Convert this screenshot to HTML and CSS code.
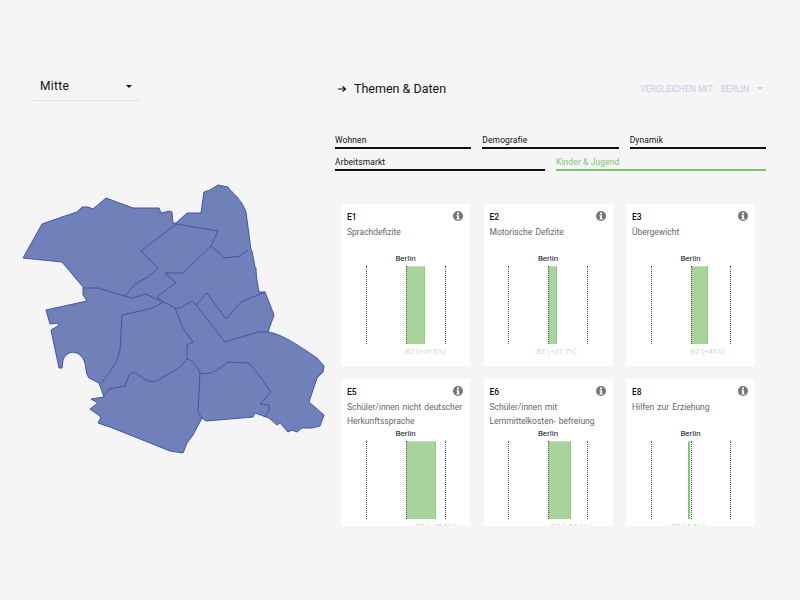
FILE: index.html
```html
<!DOCTYPE html>
<html lang="de">
<head>
    <meta charset="UTF-8">
    <title>Themen &amp; Daten</title>
    <link rel="stylesheet" href="styles.css">
</head>
<body>
<div class="page">
    <div class="left">
        <div class="district">
            <span>Mitte</span>
            <i class="caret"></i>
        </div>
        <svg class="map" viewBox="0 180 335 280" width="335" height="280">
            <path class="area" d="M23 258L42 224L62 217L77 212L82 207L88 207L93 209L106 198L133 208L159 208L161 213L170 211L172 212L173 223L176 223L187 213L201 213L204 192L210 190L218 185L228 187L229 189C236 195 243 203 246 212L248 227L251 250L252 251L255 267L256 268C256 278 258 285 259 292L265 292L274 315L268 332C282 334 296 344 317 358L324 366L323 372L317 378L309 402L324 415L320 426L312 428L302 428L297 432L292 430L288 432L280 423L277 425L269 418L266 417L255 413L253 417L206 421L202 418L193 435L187 443L183 453L170 451L110 427L98 423L101 417L90 409L98 403L91 399L104 397L99 383L89 378C84 372 88 362 80 355C74 350 66 352 63 360L62 368L59 368L51 330L58 326L59 323L50 324L46 310L87 301L83 295L83 287L62 262Z"/>
            <path class="border" d="M83 288L98 288L125 296L132 298L146 294L163 302L170 305L175 308L180 308L192 301L196 305L207 293L226 319L241 302L265 292"/>
            <path class="border" d="M125 296L135 284L148 277L158 268L141 251L176 224L218 231L211 246L225 258L240 256L248 250"/>
            <path class="border" d="M211 246L183 273L165 273L176 283L170 287L157 297L163 302L153 308L122 315L120 350L117 360L110 372L101 383"/>
            <path class="border" d="M175 308L183 328L193 342L187 345L187 359C180 370 170 373 163 377C155 384 148 382 143 378L134 372L129 375L125 386L109 389L104 396"/>
            <path class="border" d="M196 305L225 342L258 332L268 332"/>
            <path class="border" d="M187 359C194 360 198 368 200 373C210 376 218 370 228 362L248 363C254 367 262 380 271 392L260 404L269 405L269 410L265 417"/>
            <path class="border" d="M200 373L198 412L202 418"/>
        </svg>
    </div>
    <div class="right">
        <div class="head">
            <h1>
                <svg class="arrow" viewBox="0 0 9 8" width="9" height="8"><path d="M0 4H7M4.5 1.5L7.5 4L4.5 6.5"/></svg>
                Themen &amp; Daten
            </h1>
            <div class="compare">
                <span>VERGLEICHEN MIT:</span>
                <span>BERLIN</span>
                <i class="caret caret-light"></i>
            </div>
        </div>
        <div class="tabs">
            <div class="tab-row">
                <a class="tab">Wohnen</a>
                <a class="tab">Demografie</a>
                <a class="tab">Dynamik</a>
            </div>
            <div class="tab-row">
                <a class="tab">Arbeitsmarkt</a>
                <a class="tab active">Kinder &amp; Jugend</a>
            </div>
        </div>
        <div class="cards">
            <div class="card">
                <div class="card-top"><b>E1</b><svg class="info" viewBox="0 0 10 10"><circle cx="5" cy="5" r="5"/><rect x="4" y="1.6" width="2" height="1.8"/><path d="M3.4 4.2H6V7.4H6.8V8.4H3.4V7.4H4.2V5.2H3.4Z"/></svg></div>
                <p class="name">Sprachdefizite</p>
                <div class="city">Berlin</div>
                <div class="chart">
                    <div class="bar" style="left:50%;width:24.8%"></div>
                    <i class="line l0"></i><i class="line l1"></i><i class="line l2"></i>
                    <span class="value" style="left:74.8%">BZ (+49.6%)</span>
                </div>
            </div>
            <div class="card">
                <div class="card-top"><b>E2</b><svg class="info" viewBox="0 0 10 10"><circle cx="5" cy="5" r="5"/><rect x="4" y="1.6" width="2" height="1.8"/><path d="M3.4 4.2H6V7.4H6.8V8.4H3.4V7.4H4.2V5.2H3.4Z"/></svg></div>
                <p class="name">Motorische Defizite</p>
                <div class="city">Berlin</div>
                <div class="chart">
                    <div class="bar" style="left:50%;width:10.85%"></div>
                    <i class="line l0"></i><i class="line l1"></i><i class="line l2"></i>
                    <span class="value" style="left:60.85%">BZ (+21.7%)</span>
                </div>
            </div>
            <div class="card">
                <div class="card-top"><b>E3</b><svg class="info" viewBox="0 0 10 10"><circle cx="5" cy="5" r="5"/><rect x="4" y="1.6" width="2" height="1.8"/><path d="M3.4 4.2H6V7.4H6.8V8.4H3.4V7.4H4.2V5.2H3.4Z"/></svg></div>
                <p class="name">Übergewicht</p>
                <div class="city">Berlin</div>
                <div class="chart">
                    <div class="bar" style="left:50%;width:21.5%"></div>
                    <i class="line l0"></i><i class="line l1"></i><i class="line l2"></i>
                    <span class="value" style="left:71.5%">BZ (+43%)</span>
                </div>
            </div>
            <div class="card">
                <div class="card-top"><b>E5</b><svg class="info" viewBox="0 0 10 10"><circle cx="5" cy="5" r="5"/><rect x="4" y="1.6" width="2" height="1.8"/><path d="M3.4 4.2H6V7.4H6.8V8.4H3.4V7.4H4.2V5.2H3.4Z"/></svg></div>
                <p class="name">Schüler/innen nicht deutscher Herkunftssprache</p>
                <div class="city">Berlin</div>
                <div class="chart">
                    <div class="bar" style="left:50%;width:37.8%"></div>
                    <i class="line l0"></i><i class="line l1"></i><i class="line l2"></i>
                    <span class="value" style="left:87.8%">BZ (+75.6%)</span>
                </div>
            </div>
            <div class="card">
                <div class="card-top"><b>E6</b><svg class="info" viewBox="0 0 10 10"><circle cx="5" cy="5" r="5"/><rect x="4" y="1.6" width="2" height="1.8"/><path d="M3.4 4.2H6V7.4H6.8V8.4H3.4V7.4H4.2V5.2H3.4Z"/></svg></div>
                <p class="name">Schüler/innen mit Lernmittelkosten- befreiung</p>
                <div class="city">Berlin</div>
                <div class="chart">
                    <div class="bar" style="left:50%;width:28.8%"></div>
                    <i class="line l0"></i><i class="line l1"></i><i class="line l2"></i>
                    <span class="value" style="left:78.8%">BZ (+57.6%)</span>
                </div>
            </div>
            <div class="card">
                <div class="card-top"><b>E8</b><svg class="info" viewBox="0 0 10 10"><circle cx="5" cy="5" r="5"/><rect x="4" y="1.6" width="2" height="1.8"/><path d="M3.4 4.2H6V7.4H6.8V8.4H3.4V7.4H4.2V5.2H3.4Z"/></svg></div>
                <p class="name">Hilfen zur Erziehung</p>
                <div class="city">Berlin</div>
                <div class="chart">
                    <div class="bar bar-thin" style="left:47.2%;width:2.8%"></div>
                    <i class="line l0"></i><i class="line l1"></i><i class="line l2"></i>
                    <span class="value" style="left:47.2%">BZ (-5.6%)</span>
                </div>
            </div>
        </div>
    </div>
</div>
</body>
</html>
```
FILE: styles.css
```css
html,body{
    margin:0;
    padding:0;
    background-color:#f5f5f5;
}
body{
    font-family:"Roboto","Liberation Sans",sans-serif;
    color:#111;
}
.page{
    display:flex;
    width:800px;
    height:600px;
    overflow:hidden;
}
.left{
    width:335px;
    flex:none;
    padding-top:72px;
}
.right{
    width:431px;
    flex:none;
    padding-top:80px;
}

/* left column */
.district{
    display:flex;
    align-items:center;
    justify-content:space-between;
    width:92px;
    height:28px;
    margin-left:34px;
    padding:0 7px 0 6px;
    border-bottom:1px solid #e2e2e2;
    font-size:12px;
    letter-spacing:.3px;
}
.caret{
    display:block;
    width:0;
    height:0;
    border-left:3px solid transparent;
    border-right:3px solid transparent;
    border-top:3px solid #111;
}
.caret-light{
    border-top-color:#c9cbde;
    margin-left:2px;
}
.map{
    display:block;
    margin-top:79px;
}
.area{
    fill:#7080b8;
    stroke:#4154a4;
    stroke-width:1;
    stroke-linejoin:round;
}
.border{
    fill:none;
    stroke:#4154a4;
    stroke-width:1;
    stroke-linejoin:round;
}

/* header */
.head{
    display:flex;
    align-items:center;
    justify-content:space-between;
    height:17px;
}
.head h1{
    display:flex;
    align-items:center;
    gap:7px;
    margin:0 0 0 3px;
    font-size:12.5px;
    font-weight:400;
}
.arrow{
    fill:none;
    stroke:#111;
    stroke-width:1.2;
}
.compare{
    display:flex;
    align-items:center;
    gap:6px;
    padding-right:3px;
    font-size:8.5px;
    color:#c9cbde;
}

/* tabs */
.tabs{
    margin-top:37px;
}
.tab-row{
    display:flex;
    gap:11px;
    margin-bottom:7px;
}
.tab{
    flex:1;
    height:13px;
    line-height:12px;
    border-bottom:2px solid #111;
    font-size:8.5px;
    letter-spacing:.1px;
}
.tab.active{
    color:#7cc56f;
    border-bottom-color:#7cc56f;
}

/* cards */
.cards{
    display:grid;
    grid-template-columns:repeat(3,129px);
    gap:13px 13.5px;
    height:322px;
    margin:33px 0 0 6px;
    overflow:hidden;
}
.card{
    height:162px;
    padding:0 6px;
    background-color:#fff;
}
.card-top{
    display:flex;
    align-items:center;
    justify-content:space-between;
    height:22px;
    padding:4px 1px 0 0;
    box-sizing:border-box;
    font-size:8.5px;
}
.card-top b{
    font-weight:500;
}
.info{
    width:10px;
    height:10px;
    margin-top:-3px;
}
.info circle{
    fill:#777;
}
.info rect,.info path{
    fill:#fff;
}
.name{
    height:26px;
    margin:0;
    font-size:8.5px;
    line-height:13.5px;
    word-spacing:1px;
    color:#666;
}
.city{
    height:14px;
    line-height:14px;
    text-align:center;
    font-size:8px;
}
.chart{
    position:relative;
    width:80px;
    height:78px;
    margin:0 auto;
}
.bar{
    position:absolute;
    top:0;
    bottom:0;
    box-sizing:border-box;
    background-color:#a8d39b;
    border-right:1px solid #8ecb82;
    border-top:1px solid #c0e0b6;
}
.bar-thin{
    background-color:#7cc56f;
}
.line{
    position:absolute;
    top:0;
    bottom:0;
    border-left:1px dotted #555;
}
.l0{
    left:0;
}
.l1{
    left:50%;
}
.l2{
    right:0;
}
.value{
    position:absolute;
    top:100%;
    margin-top:3px;
    transform:translateX(-50%);
    white-space:nowrap;
    font-size:7.5px;
    color:#c5e5bd;
}
```
